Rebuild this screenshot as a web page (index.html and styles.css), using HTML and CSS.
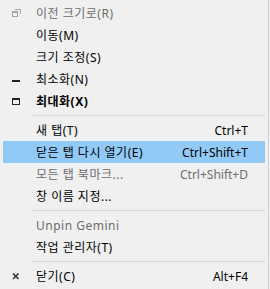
FILE: index.html
```html
<!DOCTYPE html>
<html lang="ko">
<head>
<meta charset="utf-8">
<title>Menu</title>
<link rel="stylesheet" href="styles.css">
</head>
<body>
<div class="menu">
  <div class="item disabled">
    <span class="icon"><svg width="9" height="8" viewBox="0 0 9 8"><path d="M3 0.5H8.5V5" fill="none" stroke="#a3a3a3" stroke-width="1"/><rect x="0.5" y="2.5" width="5" height="5" fill="none" stroke="#a3a3a3" stroke-width="1"/><rect x="0" y="2" width="6" height="2" fill="#a3a3a3"/></svg></span>
    <span class="label">이전 크기로(R)</span><span class="key"></span>
  </div>
  <div class="item"><span class="icon"></span><span class="label">이동(M)</span><span class="key"></span></div>
  <div class="item"><span class="icon"></span><span class="label">크기 조정(S)</span><span class="key"></span></div>
  <div class="item">
    <span class="icon"><svg width="9" height="8" viewBox="0 0 9 8"><rect x="0" y="5" width="8" height="2" fill="#222"/></svg></span>
    <span class="label">최소화(N)</span><span class="key"></span>
  </div>
  <div class="item bold">
    <span class="icon"><svg width="9" height="8" viewBox="0 0 9 8"><rect x="0.5" y="1.5" width="7" height="6" fill="none" stroke="#222" stroke-width="1"/><rect x="0" y="1" width="8" height="2" fill="#222"/></svg></span>
    <span class="label">최대화(X)</span><span class="key"></span>
  </div>
  <div class="sep"></div>
  <div class="item"><span class="icon"></span><span class="label">새 탭(T)</span><span class="key">Ctrl+T</span></div>
  <div class="item active"><span class="icon"></span><span class="label">닫은 탭 다시 열기(E)</span><span class="key">Ctrl+Shift+T</span></div>
  <div class="item disabled"><span class="icon"></span><span class="label">모든 탭 북마크...</span><span class="key">Ctrl+Shift+D</span></div>
  <div class="item"><span class="icon"></span><span class="label">창 이름 지정...</span><span class="key"></span></div>
  <div class="sep"></div>
  <div class="item disabled"><span class="icon"></span><span class="label">Unpin Gemini</span><span class="key"></span></div>
  <div class="item"><span class="icon"></span><span class="label">작업 관리자(T)</span><span class="key"></span></div>
  <div class="sep"></div>
  <div class="item">
    <span class="icon"><svg width="9" height="8" viewBox="0 0 9 8"><path d="M1 1.5L6.5 7M6.5 1.5L1 7" stroke="#333" stroke-width="1.6" fill="none"/></svg></span>
    <span class="label">닫기(C)</span><span class="key">Alt+F4</span>
  </div>
</div>
</body>
</html>
```
FILE: styles.css
```css
html, body {
  margin: 0;
  padding: 0;
  background: #f7f7f7;
}
.menu {
  width: 269px;
  height: 289px;
  box-sizing: border-box;
  padding: 2px 3px 2px 3px;
  background: #f0f0f0;
  border-right: 1px solid #cccccc;
  font-family: "Noto Sans", "Noto Sans CJK KR", sans-serif;
  font-size: 12px;
  color: #000;
}
.item {
  display: flex;
  align-items: center;
  height: 22px;
}
.item.active {
  background: #91c9f7;
}
.item.disabled {
  color: #6d6d6d;
}
.item.bold .label {
  font-weight: bold;
}
.icon {
  width: 33px;
  flex: none;
  display: flex;
  align-items: center;
  padding-left: 9px;
  box-sizing: border-box;
}
.icon svg {
  display: block;
}
.label {
  flex: 1;
  white-space: nowrap;
  letter-spacing: 0.5px;
}
.key {
  padding-right: 17px;
  white-space: nowrap;
}
.sep {
  height: 7px;
  margin-left: 28px;
  box-sizing: border-box;
  padding-top: 3px;
}
.sep::before {
  content: "";
  display: block;
  height: 1px;
  background: #d7d7d7;
}
```
